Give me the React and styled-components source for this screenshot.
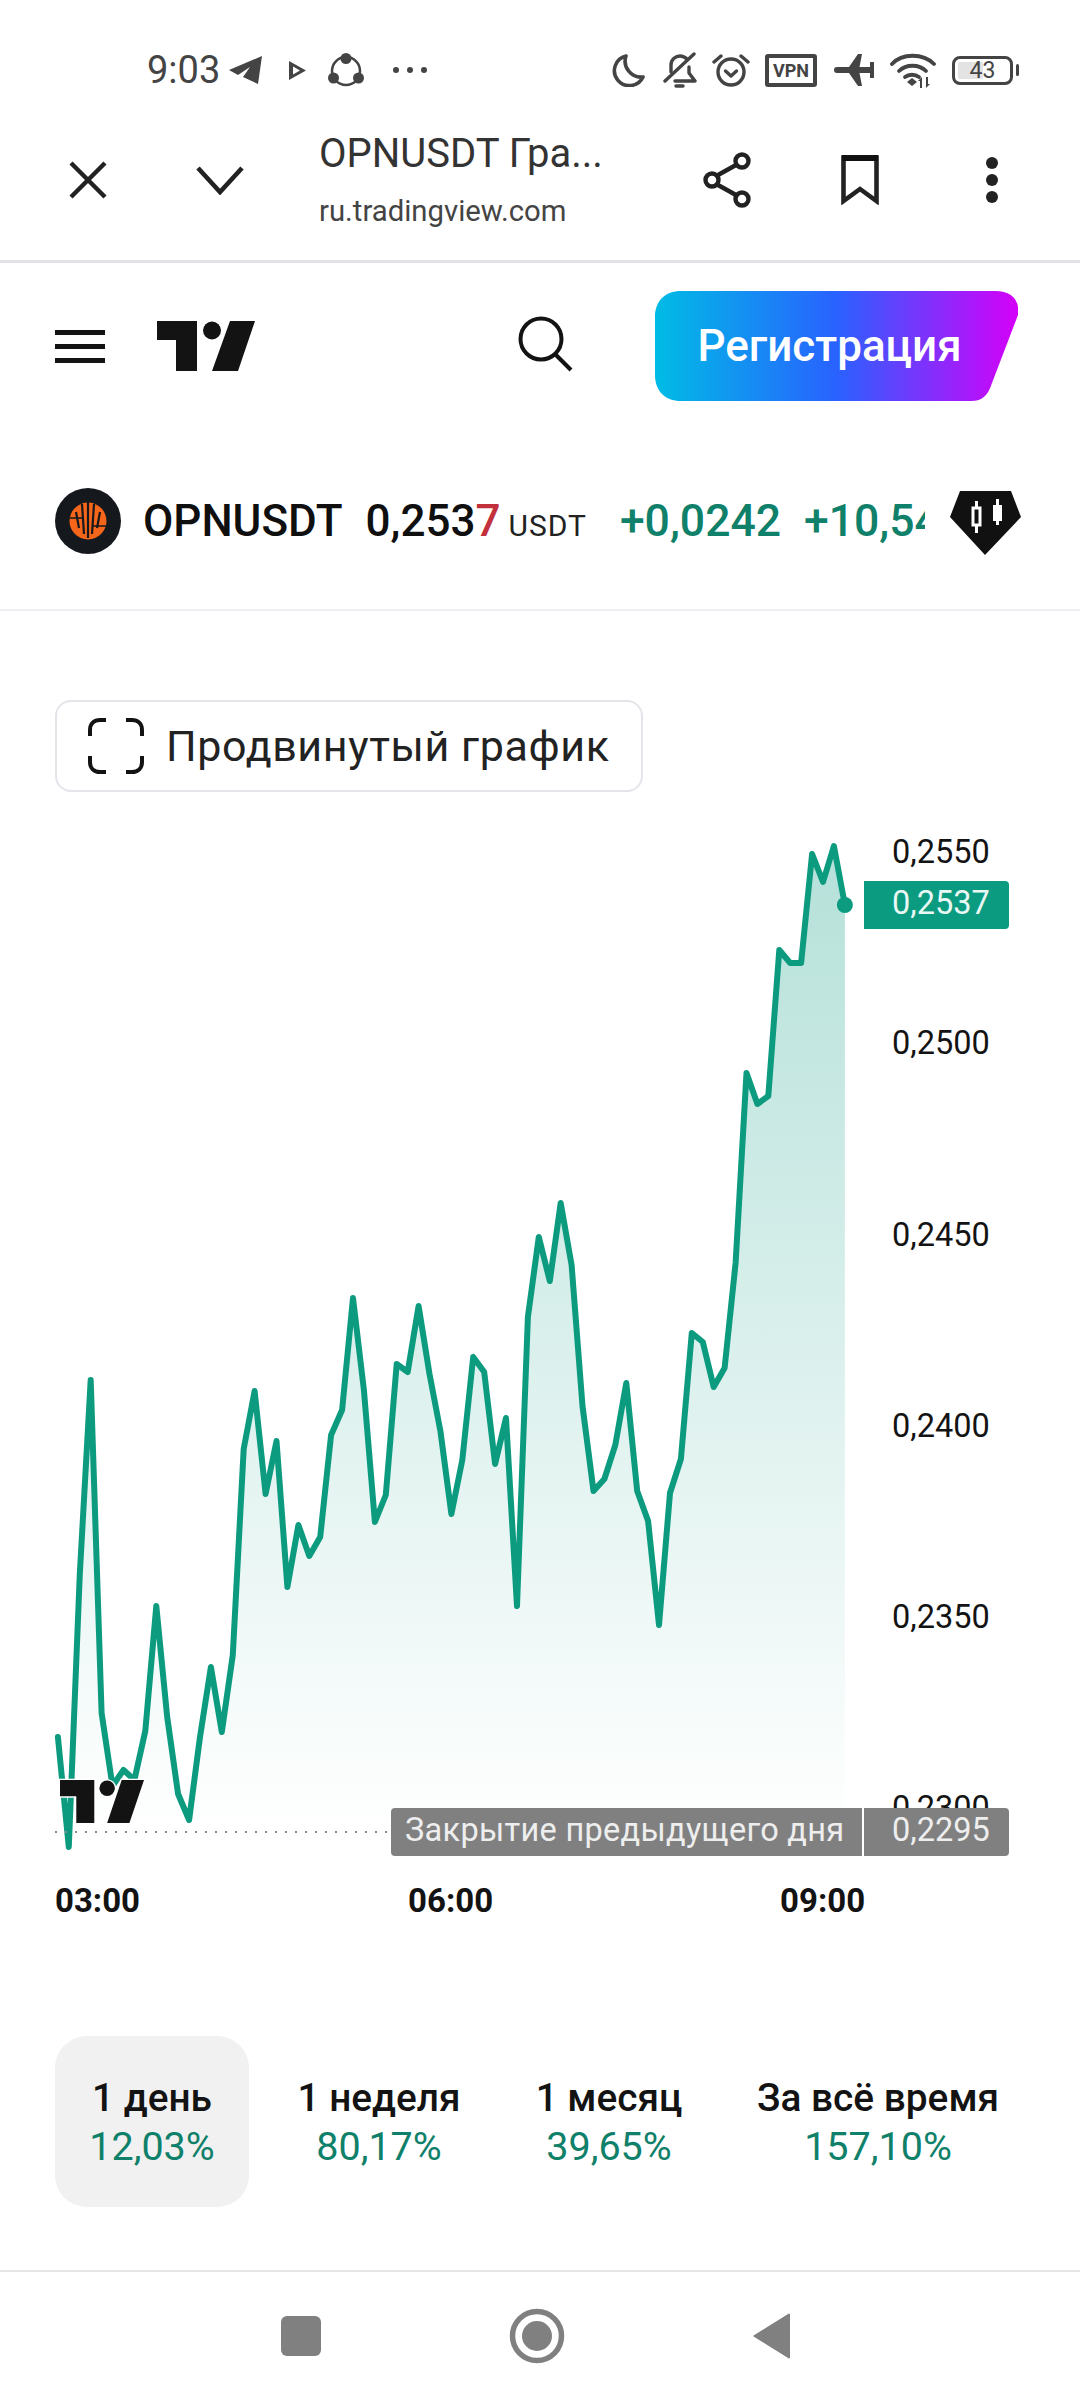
import styled, { createGlobalStyle } from 'styled-components';

const GlobalStyle = createGlobalStyle`
    html, body {
        margin: 0;
        padding: 0;
        background: #fff;
    }
    body {
        width: 1080px;
        height: 2400px;
        overflow: hidden;
        font-family: Roboto, "Noto Sans", sans-serif;
        color: #0f0f0f;
    }
    * {
        box-sizing: border-box;
    }
`;

const CHART_TOP = 830;
const CHART_BOTTOM = 1832;
const STEP = 10.93;

const PRICE_Y = [
    1737, 1847, 1574, 1380, 1713, 1786, 1770, 1780, 1731, 1606, 1717, 1794, 1820, 1737, 1667, 1732,
    1655, 1449, 1391, 1494, 1441, 1587, 1525, 1556, 1537, 1435, 1410, 1298, 1390, 1522, 1495, 1364,
    1372, 1306, 1374, 1431, 1514, 1460, 1357, 1372, 1464, 1418, 1606, 1317, 1237, 1281, 1203, 1265,
    1406, 1491, 1479, 1445, 1383, 1491, 1521, 1625, 1493, 1459, 1333, 1342, 1387, 1368, 1263, 1073,
    1104, 1096, 950, 963, 963, 854, 882, 846, 905,
];

const points = PRICE_Y.map((y, i) => `${(57.9 + i * STEP).toFixed(1)},${y - CHART_TOP}`);
const lastX = 57.9 + (PRICE_Y.length - 1) * STEP;
const lastY = PRICE_Y[PRICE_Y.length - 1] - CHART_TOP;
const areaPoints = `57.9,${CHART_BOTTOM - CHART_TOP} ${points.join(' ')} ${lastX},${CHART_BOTTOM - CHART_TOP}`;

const TICKS = ['0,2550', '0,2500', '0,2450', '0,2400', '0,2350', '0,2300'];

const TABS = [
    { label: '1 день', value: '12,03%', active: true },
    { label: '1 неделя', value: '80,17%' },
    { label: '1 месяц', value: '39,65%' },
    { label: 'За всё время', value: '157,10%' },
];

const TvLogo = ({ width, height }) => (
    <svg width={width} height={height} viewBox="0 0 98 50">
        <g fill="#131313">
            <path d="M0 0H40V50H19V19H0Z" />
            <circle cx="55" cy="9.5" r="9" />
            <path d="M73 0H98L81 50H55Z" />
        </g>
    </svg>
);

const App = () => {
    return (
        <Page>
            <GlobalStyle />

            <StatusBar>
                <StatusLeft>
                    <Clock>9:03</Clock>
                    <StatusIcon $ml={9} width="34" height="28" viewBox="0 0 34 28">
                        <path d="M0 14L33 0L29 28L14 21L21 11L9 19Z" fill="#444" />
                    </StatusIcon>
                    <StatusIcon $ml={26} width="17" height="19" viewBox="0 0 17 19">
                        <path d="M0 0L17 9.5L0 19Z M4 5.5V13.5L11 9.5Z" fill="#444" fillRule="evenodd" />
                    </StatusIcon>
                    <StatusIcon $ml={22} width="36" height="34" viewBox="0 0 36 34">
                        <circle cx="18" cy="18" r="14" fill="none" stroke="#444" strokeWidth="2.5" />
                        <circle cx="18" cy="5.5" r="5.5" fill="#444" />
                        <circle cx="5.5" cy="25" r="5.5" fill="#444" />
                        <circle cx="30.5" cy="25" r="5.5" fill="#444" />
                    </StatusIcon>
                    <StatusIcon $ml={29} width="34" height="8" viewBox="0 0 34 8">
                        <circle cx="3" cy="4" r="3" fill="#444" />
                        <circle cx="17" cy="4" r="3" fill="#444" />
                        <circle cx="31" cy="4" r="3" fill="#444" />
                    </StatusIcon>
                </StatusLeft>
                <StatusRight>
                    <StatusIcon width="34" height="34" viewBox="0 0 34 34">
                        <path d="M14 3A15 15 0 1 0 31 24A16 16 0 0 1 14 3Z" fill="none" stroke="#444" strokeWidth="3.6" strokeLinejoin="round" />
                    </StatusIcon>
                    <StatusIcon $ml={17} width="34" height="36" viewBox="0 0 34 36">
                        <g fill="none" stroke="#444" strokeWidth="3.4" strokeLinejoin="round" strokeLinecap="round">
                            <path d="M8 20V13C8 7 13 4 17 4C20 4 22 5 24 7" />
                            <path d="M26 15V21L32 29H12" />
                            <path d="M2 29L31 2" />
                            <path d="M13 34H20" />
                        </g>
                    </StatusIcon>
                    <StatusIcon $ml={15} width="38" height="36" viewBox="0 0 38 36">
                        <g fill="none" stroke="#444" strokeWidth="3.4" strokeLinecap="round" strokeLinejoin="round">
                            <circle cx="19" cy="20" r="13" />
                            <path d="M13.5 19L19 24L24.5 19" />
                            <path d="M2 10L9 4" />
                            <path d="M36 10L29 4" />
                        </g>
                    </StatusIcon>
                    <VpnBadge>VPN</VpnBadge>
                    <StatusIcon $ml={17} width="40" height="34" viewBox="0 0 40 34">
                        <path d="M3 14H15L24 1H28L25.5 14H36V9H40V25H36V20H25.5L28 33H24L15 20H3A3 3 0 0 1 3 14Z" fill="#444" />
                    </StatusIcon>
                    <StatusIcon $ml={16} width="46" height="36" viewBox="0 0 46 36">
                        <g fill="none" stroke="#444" strokeWidth="3.8" strokeLinecap="round">
                            <path d="M2 12C12 1 33 1 44 12" />
                            <path d="M9 19C16 12 29 12 36 19" />
                            <path d="M15 25C19 22 25 22 29 25" />
                        </g>
                        <path d="M17 30L22 26L27 30L22 34Z" fill="#444" />
                        <path d="M30 36V29H28L32 25V36Z M36 25V36L40 32H38V25Z" fill="#444" />
                    </StatusIcon>
                    <Battery>
                        <BatteryLevel />
                        <BatteryText>43</BatteryText>
                    </Battery>
                    <BatteryNub />
                </StatusRight>
            </StatusBar>

            <BrowserBar>
                <IconSlot>
                    <svg width="38" height="38" viewBox="0 0 38 38">
                        <path d="M2 2L36 36M36 2L2 36" stroke="#222" strokeWidth="4.4" fill="none" />
                    </svg>
                </IconSlot>
                <IconSlot>
                    <svg width="48" height="30" viewBox="0 0 48 30">
                        <path d="M2 3L24 27L46 3" stroke="#222" strokeWidth="4.6" fill="none" />
                    </svg>
                </IconSlot>
                <PageInfo>
                    <PageTitle>OPNUSDT Гра...</PageTitle>
                    <PageUrl>ru.tradingview.com</PageUrl>
                </PageInfo>
                <IconSlot>
                    <svg width="50" height="56" viewBox="0 0 50 56">
                        <g stroke="#222" strokeWidth="4.4" fill="none">
                            <path d="M15 23L33 13M15 33L33 43" />
                            <circle cx="39" cy="9" r="6.5" />
                            <circle cx="9" cy="28" r="6.5" />
                            <circle cx="39" cy="47" r="6.5" />
                        </g>
                    </svg>
                </IconSlot>
                <IconSlot>
                    <svg width="38" height="50" viewBox="0 0 38 50">
                        <path d="M2.5 2.5H35.5V46L19 34L2.5 46Z" stroke="#222" strokeWidth="4.6" fill="none" />
                        <rect x="1" y="0" width="36" height="6" fill="#111" />
                    </svg>
                </IconSlot>
                <IconSlot>
                    <svg width="14" height="48" viewBox="0 0 14 48">
                        <circle cx="7" cy="7" r="6" fill="#222" />
                        <circle cx="7" cy="24" r="6" fill="#222" />
                        <circle cx="7" cy="41" r="6" fill="#222" />
                    </svg>
                </IconSlot>
            </BrowserBar>

            <SiteHeader>
                <Hamburger>
                    <span />
                    <span />
                    <span />
                </Hamburger>
                <LogoLink>
                    <TvLogo width={98} height={50} />
                </LogoLink>
                <SearchButton>
                    <svg width="56" height="56" viewBox="0 0 56 56">
                        <circle cx="24" cy="23" r="20.5" stroke="#131313" strokeWidth="4" fill="none" />
                        <path d="M38 38L54 54" stroke="#131313" strokeWidth="4" fill="none" />
                    </svg>
                </SearchButton>
                <RegisterButton>Регистрация</RegisterButton>
            </SiteHeader>

            <SymbolRow>
                <CoinIcon width="66" height="66" viewBox="0 0 66 66">
                    <circle cx="33" cy="33" r="33" fill="#15181d" />
                    <circle cx="33" cy="33" r="18.5" fill="#f5661a" />
                    <g stroke="#15181d" strokeWidth="2.2">
                        <path d="M21 24L24 40M27 16L29 46M33 14V50M39 16L37 46M45 24L42 40" />
                        <path d="M15 30H28M38 38H51" strokeWidth="1.4" />
                    </g>
                </CoinIcon>
                <Quote>
                    <SymbolName>OPNUSDT</SymbolName>
                    <Price>0,253<PriceTail>7</PriceTail></Price>
                    <Currency>USDT</Currency>
                    <Change>+0,0242</Change>
                    <Change $ml={23}>+10,54%</Change>
                </Quote>
                <ProBadge width="72" height="64" viewBox="0 0 72 64">
                    <path d="M10 0H61L71 26L35 64L0 26Z" fill="#111" />
                    <g fill="none" stroke="#fff" strokeWidth="3">
                        <rect x="23" y="17" width="7" height="17" />
                        <path d="M26.5 10V17M26.5 34V42" />
                        <path d="M47.5 8V34" />
                    </g>
                    <rect x="43" y="14" width="9" height="16" fill="#fff" />
                </ProBadge>
            </SymbolRow>

            <AdvancedButton>
                <svg width="56" height="56" viewBox="0 0 56 56">
                    <path
                        d="M2 18V12C2 6 6 2 12 2H18M38 2H44C50 2 54 6 54 12V18M54 38V44C54 50 50 54 44 54H38M18 54H12C6 54 2 50 2 44V38"
                        stroke="#131313"
                        strokeWidth="4"
                        fill="none"
                    />
                </svg>
                <AdvancedLabel>Продвинутый график</AdvancedLabel>
            </AdvancedButton>

            <ChartArea>
                <ChartSvg width="892" height="1045" viewBox="0 0 892 1045">
                    <defs>
                        <linearGradient id="chartFill" gradientUnits="userSpaceOnUse" x1="0" y1="16" x2="0" y2={CHART_BOTTOM - CHART_TOP}>
                            <stop offset="0" stopColor="#089981" stopOpacity="0.3" />
                            <stop offset="1" stopColor="#089981" stopOpacity="0" />
                        </linearGradient>
                    </defs>
                    <polygon points={areaPoints} fill="url(#chartFill)" />
                    <polyline points={points.join(' ')} fill="none" stroke="#0d9b80" strokeWidth="6" strokeLinejoin="round" strokeLinecap="round" />
                    <circle cx={lastX} cy={lastY} r="8" fill="#0d9b80" />
                    <line x1="55" y1={CHART_BOTTOM - CHART_TOP} x2="391" y2={CHART_BOTTOM - CHART_TOP} stroke="#8a8a8a" strokeWidth="2" strokeDasharray="2 8" />
                    <svg x="60" y="950" width="84" height="43" viewBox="0 0 98 50" overflow="visible">
                        <g fill="#131313" stroke="#fff" strokeWidth="3" paintOrder="stroke">
                            <path d="M0 0H40V50H19V19H0Z" />
                            <circle cx="55" cy="9.5" r="9" />
                            <path d="M72 0H98L81 50H55Z" />
                        </g>
                    </svg>
                </ChartSvg>
                <PriceAxis>
                    {TICKS.map((tick) => (
                        <Tick key={tick}>{tick}</Tick>
                    ))}
                </PriceAxis>
                <LastPriceTag>0,2537</LastPriceTag>
                <PrevClose>
                    <PrevCloseLabel>Закрытие предыдущего дня</PrevCloseLabel>
                    <PrevCloseValue>0,2295</PrevCloseValue>
                </PrevClose>
            </ChartArea>

            <TimeAxis>
                <TimeLabel>03:00</TimeLabel>
                <TimeLabel $ml={268}>06:00</TimeLabel>
                <TimeLabel $ml={287}>09:00</TimeLabel>
            </TimeAxis>

            <Tabs>
                {TABS.map((tab) => (
                    <Tab key={tab.label} $active={tab.active}>
                        <TabLabel>{tab.label}</TabLabel>
                        <TabValue>{tab.value}</TabValue>
                    </Tab>
                ))}
            </Tabs>

            <NavBar>
                <NavSquare />
                <svg width="64" height="64" viewBox="0 0 64 64">
                    <circle cx="32" cy="32" r="24.5" fill="none" stroke="#808080" strokeWidth="5.5" />
                    <circle cx="32" cy="32" r="15" fill="#808080" />
                </svg>
                <svg width="38" height="46" viewBox="0 0 38 46">
                    <path d="M36 1.5V44.5L1.5 23Z" fill="#808080" stroke="#808080" strokeWidth="2" strokeLinejoin="round" />
                </svg>
            </NavBar>
        </Page>
    );
};

export default App;

const Page = styled.div`
    width: 1080px;
    height: 2400px;
    background: #fff;
    overflow: hidden;
`;

const StatusBar = styled.div`
    height: 100px;
    padding: 40px 61px 0 147px;
    display: flex;
    align-items: center;
    justify-content: space-between;
`;

const StatusLeft = styled.div`
    display: flex;
    align-items: center;
`;

const StatusRight = styled.div`
    display: flex;
    align-items: center;
`;

const Clock = styled.span`
    font-size: 38px;
    color: #444;
    line-height: 40px;
`;

const StatusIcon = styled.svg`
    display: block;
    flex: none;
    margin-left: ${({ $ml }) => $ml || 0}px;
`;

const VpnBadge = styled.div`
    width: 52px;
    height: 33px;
    margin-left: 15px;
    border: 4px solid #444;
    border-radius: 3px;
    font-size: 18px;
    font-weight: 700;
    line-height: 25px;
    text-align: center;
    color: #444;
`;

const Battery = styled.div`
    width: 61px;
    height: 29px;
    margin-left: 16px;
    border: 3px solid #444;
    border-radius: 8px;
    position: relative;
    display: flex;
    align-items: center;
    justify-content: center;
`;

const BatteryLevel = styled.div`
    position: absolute;
    left: 3px;
    top: 3px;
    bottom: 3px;
    width: 25px;
    background: #e3e3e3;
    border-radius: 2px;
`;

const BatteryText = styled.span`
    position: relative;
    font-size: 23px;
    line-height: 23px;
    color: #444;
`;

const BatteryNub = styled.div`
    width: 3px;
    height: 12px;
    margin-left: 3px;
    background: #444;
    border-radius: 2px;
`;

const BrowserBar = styled.div`
    height: 163px;
    padding: 0 22px;
    border-bottom: 3px solid #e0e2e8;
    display: flex;
    align-items: center;
`;

const IconSlot = styled.div`
    width: 132px;
    height: 100%;
    flex: none;
    display: flex;
    align-items: center;
    justify-content: center;
`;

const PageInfo = styled.div`
    flex: 1;
    margin-left: 33px;
    display: flex;
    flex-direction: column;
    gap: 18px;
`;

const PageTitle = styled.div`
    font-size: 40px;
    line-height: 44px;
    color: #333;
    white-space: nowrap;
`;

const PageUrl = styled.div`
    font-size: 29.3px;
    line-height: 34px;
    color: #444;
`;

const SiteHeader = styled.header`
    height: 166px;
    padding: 0 62px 0 55px;
    display: flex;
    align-items: center;
`;

const Hamburger = styled.div`
    width: 50px;
    display: flex;
    flex-direction: column;
    gap: 9px;

    span {
        height: 5px;
        background: #131313;
    }
`;

const LogoLink = styled.div`
    margin-left: 52px;
    display: flex;
`;

const SearchButton = styled.div`
    margin-left: 262px;
    display: flex;
    margin-bottom: 4px;
`;

const RegisterButton = styled.div`
    width: 363px;
    height: 110px;
    margin-left: auto;
    background: linear-gradient(90deg, #00bce5 0%, #2962ff 50%, #d500f9 100%);
    clip-path: path('M26 0H340C356 0 365 8 363 24L337 92C333 104 328 110 316 110H26C10 110 0 100 0 84V26C0 10 10 0 26 0Z');
    display: flex;
    align-items: center;
    justify-content: center;
    color: #fff;
    font-size: 44px;
    font-weight: 500;
    padding-right: 14px;
`;

const SymbolRow = styled.div`
    height: 182px;
    padding: 4px 58px 0 55px;
    border-bottom: 2px solid #eeeff2;
    display: flex;
    align-items: center;
`;

const CoinIcon = styled.svg`
    flex: none;
`;

const Quote = styled.div`
    width: 783px;
    margin: 0 25px 0 22px;
    display: flex;
    align-items: baseline;
    overflow: hidden;
    white-space: nowrap;
`;

const SymbolName = styled.span`
    font-size: 44px;
    font-weight: 500;
`;

const Price = styled.span`
    margin-left: 23px;
    font-size: 44px;
    font-weight: 500;
`;

const PriceTail = styled.span`
    color: #c2303c;
`;

const Currency = styled.span`
    margin-left: 8px;
    font-size: 30px;
    color: #222;
    letter-spacing: 1px;
`;

const Change = styled.span`
    margin-left: ${({ $ml }) => $ml || 33}px;
    font-size: 44.5px;
    font-weight: 500;
    color: #0f8069;
`;

const ProBadge = styled.svg`
    flex: none;
    margin-top: 3px;
`;

const AdvancedButton = styled.div`
    width: 588px;
    height: 92px;
    margin: 89px 0 0 55px;
    padding-left: 31px;
    border: 2px solid #e3e5ea;
    border-radius: 16px;
    display: flex;
    align-items: center;
    gap: 22px;
`;

const AdvancedLabel = styled.span`
    font-size: 43px;
    color: #222;
    letter-spacing: 0.6px;
    white-space: nowrap;
`;

const ChartArea = styled.div`
    height: 1045px;
    margin-top: 38px;
    position: relative;
    display: flex;
`;

const ChartSvg = styled.svg`
    display: block;
    flex: none;
`;

const PriceAxis = styled.div`
    padding-top: 1px;
    display: flex;
    flex-direction: column;
    gap: 149.3px;
`;

const Tick = styled.div`
    height: 42px;
    font-size: 32.5px;
    line-height: 42px;
    color: #131313;
`;

const LastPriceTag = styled.div`
    position: absolute;
    left: 864px;
    top: 51px;
    width: 145px;
    height: 48px;
    padding-left: 28px;
    background: #0b9b80;
    border-radius: 0 4px 4px 0;
    color: #e9f8f4;
    font-size: 32.5px;
    line-height: 44px;
`;

const PrevClose = styled.div`
    position: absolute;
    left: 391px;
    top: 978px;
    height: 48px;
    display: flex;
    gap: 2px;
    font-size: 32.5px;
    line-height: 44px;
    color: #eee;
`;

const PrevCloseLabel = styled.div`
    width: 471px;
    padding-left: 14px;
    background: #808080;
    border-radius: 4px 0 0 4px;
    letter-spacing: 0.3px;
    white-space: nowrap;
    overflow: hidden;
`;

const PrevCloseValue = styled.div`
    width: 145px;
    padding-left: 28px;
    background: #808080;
    border-radius: 0 4px 4px 0;
`;

const TimeAxis = styled.div`
    height: 50px;
    padding-left: 55px;
    display: flex;
    align-items: center;
`;

const TimeLabel = styled.span`
    margin-left: ${({ $ml }) => $ml || 0}px;
    font-size: 33px;
    font-weight: 700;
    color: #131313;
`;

const Tabs = styled.div`
    height: 171px;
    margin: 111px 0 0 55px;
    display: grid;
    grid-template-columns: 194px 260px 200px 338px;
`;

const Tab = styled.div`
    display: flex;
    flex-direction: column;
    align-items: center;
    justify-content: center;
    gap: 6px;
    border-radius: 32px;
    background: ${({ $active }) => ($active ? '#f1f1f1' : 'transparent')};
`;

const TabLabel = styled.div`
    font-size: 38.8px;
    line-height: 43px;
    font-weight: 500;
    color: #131313;
    white-space: nowrap;
`;

const TabValue = styled.div`
    font-size: 39.5px;
    line-height: 43px;
    color: #0f8069;
`;

const NavBar = styled.nav`
    height: 130px;
    margin-top: 63px;
    padding-right: 9px;
    border-top: 2px solid #e6e6e6;
    display: flex;
    align-items: center;
    justify-content: center;
    gap: 184px;
`;

const NavSquare = styled.div`
    width: 40px;
    height: 40px;
    background: #808080;
    border-radius: 6px;
`;
